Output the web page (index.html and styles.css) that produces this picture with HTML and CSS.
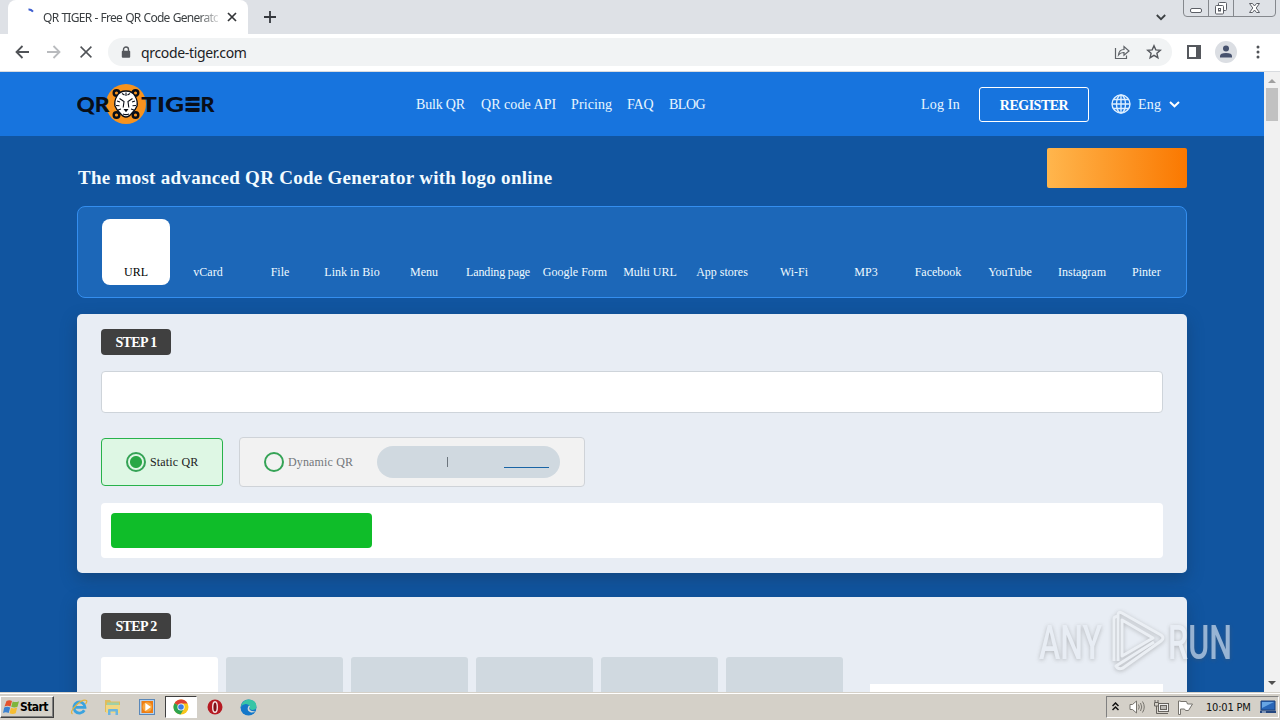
FILE: index.html
```html
<!DOCTYPE html>
<html lang="en">
<head>
    <meta charset="UTF-8">
    <meta name="viewport" content="width=device-width, initial-scale=1.0">
    <title>QR TIGER - Free QR Code Generator</title>
    <link rel="stylesheet" href="styles.css">
</head>
<body>
    <div class="tabstrip">
        <div class="tab">
            <svg class="spinner" width="16" height="16" viewBox="0 0 16 16"><path d="M6.500 1.500Q9 1.300 11 3.600" fill="none" stroke="#3f5fd0" stroke-width="2"/></svg>
            <span class="tab-title">QR TIGER - Free QR Code Generato</span>
            <svg width="10" height="10" viewBox="0 0 10 10"><path d="M1 1l8 8M9 1l-8 8" stroke="#333538" stroke-width="1.7"/></svg>
        </div>
        <svg class="new-tab" width="12" height="12" viewBox="0 0 12 12"><path d="M6 0v12M0 6h12" stroke="#35383d" stroke-width="1.8"/></svg>
        <svg class="tab-search" width="10" height="7" viewBox="0 0 10 7"><path d="M.8 1l4.2 4.2L9.2 1" fill="none" stroke="#3c4043" stroke-width="1.8"/></svg>
        <svg class="window-buttons" width="94" height="17" viewBox="0 0 94 17" fill="none" stroke="#85888d">
            <path d="M.5 0v13q0 3.500 3.500 3.500h85q3.500 0 3.500-3.500V0M25.500 0v16M50.500 0v16"/>
            <rect x="7.500" y="8.500" width="11" height="4" rx="1.500" fill="#fff" stroke="#5c5f66"/>
            <rect x="35.500" y="2.500" width="8" height="8" rx="1" fill="#fff" stroke="#5c5f66"/>
            <rect x="32.500" y="5.500" width="8" height="8.500" rx="1" fill="#fff" stroke="#5c5f66"/>
            <rect x="35.500" y="8.500" width="2" height="2.500" stroke="#5c5f66"/>
            <path d="M66.500 3.500h3l2 2.500 2-2.500h3l-3.300 4.500 3.300 4.500h-3l-2-2.500-2 2.500h-3l3.300-4.500z" fill="#fff" stroke="#5c5f66"/>
        </svg>
    </div>

    <div class="toolbar">
        <svg width="14" height="14" viewBox="0 0 14 14" fill="none" stroke="#505357" stroke-width="1.8"><path d="M14 7H1.500M7.500 1l-6 6 6 6"/></svg>
        <svg width="14" height="14" viewBox="0 0 14 14" fill="none" stroke="#b9bbbe" stroke-width="1.800"><path d="M0 7h12.500M6.500 1l6 6-6 6"/></svg>
        <svg class="stop" width="12" height="12" viewBox="0 0 12 12" fill="none" stroke="#505357" stroke-width="1.500"><path d="M.6.6l10.800 10.800M11.400.6L.6 11.400"/></svg>
        <div class="address">
            <svg width="10" height="13" viewBox="0 0 10 13"><path d="M2.500 5V3.500a2.500 2.500 0 0 1 5 0V5" fill="none" stroke="#55585d" stroke-width="1.400"/><rect x=".8" y="4.800" width="8.400" height="7" rx="1" fill="#55585d"/></svg>
            <span class="url">qrcode-tiger.com</span>
            <svg class="share" width="16" height="16" viewBox="0 0 16 16" fill="none" stroke="#5f6368" stroke-width="1.200"><path d="M1.500 4v10.500h11V11.500"/><path d="M4.500 11q.5-5.500 5.500-5.500V2.500L15 7l-5 4.300V8.500Q6.500 8.300 4.500 11z"/></svg>
            <svg class="star" width="16" height="16" viewBox="0 0 16 16" fill="none" stroke="#55585d" stroke-width="1.400"><path d="M8 1.800l1.800 4.100 4.500.4-3.400 3 1 4.400L8 11.400l-3.900 2.300 1-4.400-3.400-3 4.500-.4z"/></svg>
        </div>
        <svg class="panel" width="14" height="14" viewBox="0 0 14 14"><path d="M1 1h12v12H1z" fill="none" stroke="#55585d" stroke-width="2"/><path d="M9 0h5v14H9z" fill="#55585d"/></svg>
        <svg class="profile" width="22" height="22" viewBox="0 0 22 22"><circle cx="11" cy="11" r="11" fill="#dbdee3"/><circle cx="11" cy="7.500" r="3" fill="#47526e"/><path d="M5 16.500v-1.500q0-3 6-3t6 3v1.500z" fill="#47526e"/></svg>
        <svg class="dots" width="4" height="14" viewBox="0 0 4 14" fill="#505357"><circle cx="2" cy="2" r="1.500"/><circle cx="2" cy="7" r="1.500"/><circle cx="2" cy="12" r="1.500"/></svg>
    </div>

    <div class="viewport">
        <div class="page">
            <header class="site-header">
                <svg class="logo" width="140" height="42" viewBox="0 0 140 42">
                    <circle cx="49" cy="21" r="20" fill="#f7931e"/>
                    <g class="logo-text">
                        <text x="-.5" y="28.500" textLength="33" lengthAdjust="spacingAndGlyphs">QR</text>
                        <text x="64" y="28.500" textLength="43" lengthAdjust="spacingAndGlyphs">TIG</text>
                        <text x="109" y="28.500" textLength="14" lengthAdjust="spacingAndGlyphs">E</text>
                        <text x="123.500" y="28.500" textLength="14" lengthAdjust="spacingAndGlyphs">R</text>
                    </g>
                    <path d="M107.500 18.700h16M107.500 24h16" stroke="#1774de" stroke-width="2"/>
                    <path d="M108.500 16h14M108.500 21.400h14M108.500 26.800h14" stroke="#090e18" stroke-width="3.400"/>
                    <g fill="#f7931e" stroke="#090e18" stroke-width="2.400">
                        <circle cx="39.500" cy="10" r="2.800"/><circle cx="58.500" cy="10" r="2.800"/>
                        <circle cx="39.500" cy="32" r="2.800"/><circle cx="58.500" cy="32" r="2.800"/>
                    </g>
                    <path d="M49 8q6.500 0 9 5 3 5 2 10-1.500 4-5 7-3 4-6 4t-6-4q-3.500-3-5-7-1-5 2-10 2.500-5 9-5z" fill="#fff" stroke="#090e18" stroke-width="1.300"/>
                    <path d="M49 9.500v3.500M45 10.500l2.500 1.500M53 10.500l-2.500 1.500M40 18l3 1M58 18l-3 1M39 22.500l3.500.3M59 22.500l-3.500.3M41 27l3-1M57 27l-3-1M42.500 15.500l4.500 3-.8 6M55.500 15.500l-4.500 3 .8 6M46 31q3 1.200 6 0" fill="none" stroke="#090e18" stroke-width="1.100"/>
                    <path d="M46.500 26h5L49 29.300z" fill="#090e18"/>
                </svg>
                <nav class="main-nav">
                    <a class="nav-bulk">Bulk QR</a>
                    <a class="nav-api">QR code API</a>
                    <a class="nav-pricing">Pricing</a>
                    <a class="nav-faq">FAQ</a>
                    <a class="nav-blog">BLOG</a>
                </nav>
                <div class="account">
                    <a class="login">Log In</a>
                    <a class="register">REGISTER</a>
                    <svg class="globe" width="20" height="20" viewBox="0 0 20 20" fill="none" stroke="#dceeff" stroke-width="1.400"><circle cx="10" cy="10" r="9"/><ellipse cx="10" cy="10" rx="4.500" ry="9"/><path d="M10 1v18M1 10h18M2.500 5.500h15M2.500 14.500h15"/></svg>
                    <span class="lang">Eng</span>
                    <svg width="11" height="7" viewBox="0 0 11 7"><path d="M1 1l4.500 4.300L10 1" fill="none" stroke="#fff" stroke-width="2"/></svg>
                </div>
            </header>

            <main class="container">
                <div class="title-row">
                    <h1>The most advanced QR Code Generator with logo online</h1>
                    <div class="cta"></div>
                </div>

                <div class="types">
                    <div class="types-list">
                        <div class="type active">URL</div>
                        <div class="type">vCard</div>
                        <div class="type">File</div>
                        <div class="type">Link in Bio</div>
                        <div class="type">Menu</div>
                        <div class="type landing">Landing page</div>
                        <div class="type google">Google Form</div>
                        <div class="type">Multi URL</div>
                        <div class="type">App stores</div>
                        <div class="type">Wi-Fi</div>
                        <div class="type">MP3</div>
                        <div class="type">Facebook</div>
                        <div class="type">YouTube</div>
                        <div class="type">Instagram</div>
                        <div class="type last">Pinter</div>
                    </div>
                </div>

                <section class="card">
                    <span class="step">STEP 1</span>
                    <div class="url-input"></div>
                    <div class="options">
                        <div class="option static">
                            <span class="radio checked"></span>
                            <span>Static QR</span>
                        </div>
                        <div class="option dynamic">
                            <span class="radio"></span>
                            <span>Dynamic QR</span>
                            <div class="pill"><span class="divider"></span><span class="underline"></span></div>
                        </div>
                    </div>
                    <div class="generate"><div class="generate-button"></div></div>
                </section>

                <section class="card second">
                    <div class="left">
                        <span class="step">STEP 2</span>
                        <div class="swatches">
                            <div class="swatch selected"></div>
                            <div class="swatch"></div>
                            <div class="swatch"></div>
                            <div class="swatch"></div>
                            <div class="swatch"></div>
                            <div class="swatch"></div>
                        </div>
                    </div>
                    <div class="preview"></div>
                </section>
            </main>
        </div>
        <div class="scrollbar">
            <svg width="8" height="4" viewBox="0 0 8 4"><path d="M0 4l4-4 4 4z" fill="#a0a0a0"/></svg>
            <div class="thumb"></div>
            <svg class="down" width="8" height="4" viewBox="0 0 8 4"><path d="M0 0l4 4 4-4z" fill="#505050"/></svg>
        </div>
    </div>

    <div class="taskbar">
        <div class="start">
            <svg width="17" height="16" viewBox="0 0 17 16">
                <path d="M3.500 2q3-1.500 5.500 0L7.500 7.500q-3-1.300-6 0z" fill="#e5532d"/>
                <path d="M9.700 2.500q3 1.300 6.300-.3L14.500 7.800q-3 1.400-6.300 0z" fill="#7fb53c"/>
                <path d="M1.200 8.500q3-1.300 6 0L5.700 14q-3-1.300-5.700 0z" fill="#3c82d0"/>
                <path d="M8 8.800q3 1.300 6.200-.2l-1.500 5.600q-3 1.400-6.200 0z" fill="#f6bd32"/>
            </svg>
            <span>Start</span>
        </div>
        <svg class="ie" width="18" height="18" viewBox="0 0 18 18" fill="none">
            <path d="M14.300 12.300A5.600 5.600 0 1 1 15 9.300H5" stroke="#3aa3df" stroke-width="2.800"/>
            <path d="M2.500 16Q-.5 14 6 7.500T16.500 2.500q1 1-1 3.500" stroke="#e4b33b" stroke-width="1.200"/>
        </svg>
        <svg class="explorer" width="18" height="18" viewBox="0 0 18 18">
            <path d="M1 2h5l1 1.500h9V14H1z" fill="#dfbd5c"/><path d="M3 4.500h12v4H3z" fill="#9fd0a8"/>
            <path d="M2 7h14v8H2z" fill="#f1d783"/><path d="M4 17v-5q0-1 1-1h8q1 0 1 1v5h-2.500v-3.500h-5V17z" fill="#6bb5df"/>
        </svg>
        <svg class="player" width="16" height="16" viewBox="0 0 16 16">
            <rect x=".5" y=".5" width="15" height="15" fill="#b5d2ee" stroke="#5a88b9"/><rect x="2.500" y="2" width="11.500" height="12" fill="#ed7d14"/>
            <circle cx="8.300" cy="8" r="4.800" fill="#f9a63c"/><path d="M6.300 4v8L12 8z" fill="#fff"/>
        </svg>
        <div class="active-app">
            <svg width="16" height="16" viewBox="0 0 16 16">
                <circle cx="8" cy="8" r="7.500" fill="#f8c61c"/>
                <path d="M8 8L1.500 4.200A7.500 7.500 0 0 1 14.600 4.500H8z" fill="#de4034"/>
                <path d="M8 8L1.500 4.200A7.500 7.500 0 0 0 7.500 15.500L11 9.800z" fill="#2da450"/>
                <circle cx="8" cy="8" r="3.600" fill="#fff"/><circle cx="8" cy="8" r="2.800" fill="#3c7de4"/>
            </svg>
        </div>
        <svg class="opera" width="16" height="16" viewBox="0 0 16 16"><circle cx="8" cy="8" r="7.500" fill="#b61a22"/><ellipse cx="8" cy="8" rx="2.300" ry="5.300" fill="#801017" stroke="#f5e5e5" stroke-width="1.400"/></svg>
        <svg class="edge" width="17" height="17" viewBox="0 0 17 17">
            <circle cx="8.500" cy="8.500" r="8" fill="#1477c9"/>
            <path d="M1 8q1-7.500 8-7.500 7 .5 7.500 6.500 0 4-4 4-3.500 0-2.500-3Q8.500 4.500 5.500 5 2 5.500 1 8z" fill="#38c5a6"/>
            <path d="M8 8q-1.500 4 3 5.500 2.500.3 4.500-1.500-4.500 1-6-1.500-.8-1.500.5-3-1-1.500-2 .5z" fill="#d5d9d6"/>
        </svg>
        <div class="tray">
            <svg class="chevrons" width="7" height="9" viewBox="0 0 7 9" fill="none" stroke="#111" stroke-width="1.500"><path d="M.5 4l3-3 3 3M.5 8l3-3 3 3"/></svg>
            <svg class="speaker" width="16" height="14" viewBox="0 0 16 14" fill="none" stroke="#77746e"><path d="M1 4.500h2.500L7.500 1v12L3.500 9.500H1z" fill="#fff"/><path d="M9.500 4.500q1.500 2.500 0 5M11.500 3q2.500 4 0 8M13.500 1.500q3.500 5.500 0 11"/></svg>
            <svg class="network" width="17" height="16" viewBox="0 0 17 16" fill="none" stroke="#66635e"><rect x="5.500" y="4.500" width="10" height="8" fill="#eee"/><rect x="7.500" y="6.500" width="6" height="4" fill="#bbb9b5"/><path d="M6 14.500h9M2 1v2M5 1v2M1.500 3.500h4V7h-4zM3.500 7v7.500H6"/></svg>
            <svg class="flag" width="17" height="15" viewBox="0 0 17 15" stroke="#77746e" fill="#fff"><path d="M1.500 1v13.500h2V9h4l1 1.500h3L15.500 4h-5l-1-2.500h-6V1z"/></svg>
            <span class="clock">10:01 PM</span>
            <svg class="desktop" width="16" height="14" viewBox="0 0 16 14"><path d="M1 1h14v9H1z" fill="#2866b8" stroke="#183f7a"/><path d="M2 2h12L2 8z" fill="#67a5e4"/><path d="M0 10.500h16v2.500H0z" fill="#24477f"/><path d="M2 12h4" stroke="#d9e5f1"/></svg>
        </div>
    </div>

    <svg class="watermark" width="200" height="70" viewBox="0 0 200 70">
        <g class="mark-text">
            <text x="4" y="53" textLength="63" lengthAdjust="spacingAndGlyphs">ANY</text>
            <text x="133" y="53" textLength="64" lengthAdjust="spacingAndGlyphs">RUN</text>
        </g>
        <g class="mark-sign">
            <path d="M87 14v36l31-18z"/>
            <path d="M79 55V13q0-2.500 3-2.500"/>
            <path d="M83 55V9q0-4 4-2l39 22q4 3 0 6L88 62q-5 2-7-2l38-24"/>
        </g>
    </svg>
</body>
</html>
```

FILE: styles.css
```css
* {
    box-sizing: border-box;
}

body {
    margin: 0;
    width: 1280px;
    height: 720px;
    overflow: hidden;
    display: flex;
    flex-direction: column;
    position: relative;
    font-family: "Liberation Serif", "Times New Roman", serif;
}

svg {
    display: block;
    flex-shrink: 0;
}

/* browser window */
.tabstrip {
    height: 34px;
    background: #dee1e6;
    display: flex;
    align-items: flex-start;
    padding-left: 8px;
}

.tab {
    width: 240px;
    height: 34px;
    background: #fff;
    border-radius: 8px 8px 0 0;
    display: flex;
    align-items: center;
    padding-left: 14px;
}

.spinner {
    margin-top: -2px;
}

.tab-title {
    width: 175px;
    margin-left: 5px;
    margin-right: 9px;
    white-space: nowrap;
    font: 12px "Noto Sans", sans-serif;
    letter-spacing: -0.72px;
    word-spacing: 0.6px;
    color: #3c4043;
    -webkit-mask-image: linear-gradient(to right, #000 155px, transparent 180px);
    mask-image: linear-gradient(to right, #000 155px, transparent 180px);
}

.new-tab {
    margin: 11px 0 0 16px;
}

.tab-search {
    margin: 14px 17px 0 auto;
}

.window-buttons {
    margin-right: 3px;
}

.toolbar {
    height: 38px;
    background: #fff;
    border-bottom: 1px solid #d8dbdf;
    display: flex;
    align-items: center;
    gap: 18px;
    padding-left: 15px;
    padding-bottom: 1px;
}

.stop {
    margin-left: 1px;
}

.address {
    width: 1064px;
    height: 28px;
    margin-left: -2px;
    border-radius: 14px;
    background: #f1f3f4;
    display: flex;
    align-items: center;
    padding: 0 10px 0 13px;
}

.url {
    margin-left: 10px;
    font: 14px "Noto Sans", sans-serif;
    letter-spacing: -0.34px;
    color: #202124;
}

.share {
    margin-left: auto;
}

.star {
    margin-left: 16px;
}

.panel {
    margin-left: -3px;
}

.profile {
    margin-left: -4px;
}

.dots {
    margin-left: 1px;
}

.viewport {
    height: 620px;
    display: flex;
}

.page {
    width: 1264px;
    height: 620px;
    overflow: hidden;
    background: #1155a0;
}

.scrollbar {
    width: 16px;
    background: #f1f1f1;
    display: flex;
    flex-direction: column;
    align-items: center;
    padding: 7px 0;
}

.thumb {
    width: 12px;
    height: 33px;
    margin-top: 5px;
    background: #c1c1c1;
}

.down {
    margin-top: auto;
}

/* site header */
.site-header {
    height: 64px;
    background: #1774de;
    color: #e9f7ff;
    display: flex;
    align-items: center;
    padding-left: 77px;
    font-size: 14px;
}

.logo-text {
    font: 900 20px Lato, sans-serif;
    fill: #090e18;
}

.main-nav {
    margin-left: 199px;
    padding-top: 1px;
    display: flex;
    width: 305px;
    white-space: nowrap;
}

.nav-bulk {
    width: 65px;
    letter-spacing: -0.2px;
}

.nav-api {
    width: 90px;
    letter-spacing: 0.05px;
}

.nav-pricing {
    width: 56px;
    letter-spacing: 0.1px;
}

.nav-faq {
    width: 42px;
    letter-spacing: -0.15px;
}

.nav-blog {
    letter-spacing: -0.5px;
}

.account {
    display: flex;
    align-items: center;
    white-space: nowrap;
}

.login {
    width: 58px;
    margin-left: 200px;
    padding-top: 1px;
    letter-spacing: 0.2px;
}

.register {
    width: 110px;
    height: 35px;
    border: 1px solid #fff;
    border-radius: 3px;
    text-align: center;
    line-height: 35px;
    font-weight: bold;
    color: #fff;
    letter-spacing: -0.5px;
}

.globe {
    margin-left: 22px;
}

.lang {
    width: 31px;
    margin-left: 7px;
    padding-top: 1px;
    letter-spacing: 0.2px;
}

.container {
    width: 1110px;
    margin-left: 77px;
}

.title-row {
    height: 70px;
    display: flex;
    justify-content: space-between;
    padding-top: 12px;
}

h1 {
    margin: 18px 0 0 1px;
    font-size: 19px;
    line-height: 24px;
    letter-spacing: 0.28px;
    color: #f2fbff;
}

.cta {
    width: 140px;
    height: 40px;
    border-radius: 2px;
    background: linear-gradient(to right, #ffb64d, #fa7800);
}

.types {
    height: 92px;
    border: 1px solid #348eef;
    border-radius: 8px;
    background: #1c67b8;
    padding: 12px 24px;
}

.types-list {
    display: flex;
    gap: 4px;
}

.type {
    width: 68px;
    height: 66px;
    flex-shrink: 0;
    padding-top: 45px;
    text-align: center;
    white-space: nowrap;
    font-size: 12px;
    line-height: 16px;
    color: #eefaff;
}

.type.active {
    background: #fff;
    color: #000;
    border-radius: 8px;
}

.type.landing {
    width: 72px;
    letter-spacing: -0.15px;
}

.type.google {
    width: 74px;
}

.type.last {
    width: 42px;
    padding-left: 12px;
    text-align: left;
}

/* steps */
.card {
    height: 259px;
    margin-top: 16px;
    padding: 15px 24px;
    border-radius: 5px;
    background: #e8edf4;
    box-shadow: 0 6px 16px rgba(20, 50, 80, 0.4);
}

.step {
    display: block;
    width: 70px;
    height: 26px;
    border-radius: 4px;
    background: #404040;
    color: #fff;
    text-align: center;
    font-weight: bold;
    font-size: 14px;
    line-height: 27px;
    letter-spacing: -0.6px;
}

.url-input {
    height: 42px;
    margin-top: 16px;
    border: 1px solid #ced4da;
    border-radius: 4px;
    background: #fff;
}

.options {
    display: flex;
    align-items: center;
    gap: 16px;
    margin-top: 24px;
}

.option {
    display: flex;
    align-items: center;
    height: 50px;
    border: 1px solid #cfd3d8;
    border-radius: 4px;
    padding-left: 24px;
    gap: 4px;
    font-size: 12px;
    line-height: 16px;
    letter-spacing: 0.15px;
    white-space: nowrap;
}

.option.static {
    width: 122px;
    height: 48px;
    border-color: #28b24b;
    background: #def7e4;
    color: #222;
}

.option.dynamic {
    width: 346px;
    background: #f2f2f2;
    color: #73777b;
}

.radio {
    width: 20px;
    height: 20px;
    border: 2px solid #35a356;
    border-radius: 50%;
    flex-shrink: 0;
}

.radio.checked {
    background: radial-gradient(circle, #28a745 5.5px, transparent 6.5px);
}

.pill {
    width: 183px;
    height: 32px;
    margin-left: auto;
    margin-right: 24px;
    border-radius: 16px;
    background: #d0d9e0;
    display: flex;
    align-items: center;
}

.divider {
    width: 1px;
    height: 10px;
    margin-left: 70px;
    background: #6c757d;
}

.underline {
    width: 45px;
    height: 1px;
    margin: 10px 0 0 56px;
    background: #1964a5;
}

.generate {
    height: 55px;
    margin-top: 16px;
    padding: 10px;
    border-radius: 4px;
    background: #fff;
}

.generate-button {
    width: 261px;
    height: 35px;
    border-radius: 4px;
    background: #0fbd29;
}

.card.second {
    margin-top: 24px;
    padding-top: 16px;
    display: flex;
    justify-content: space-between;
}

.swatches {
    display: flex;
    gap: 8px;
    margin-top: 18px;
}

.swatch {
    width: 117px;
    height: 100px;
    border-radius: 3px;
    background: #d0d9e0;
}

.swatch.selected {
    background: #fff;
}

.preview {
    width: 293px;
    height: 150px;
    margin-top: 71px;
    background: #fff;
}

/* desktop */
.taskbar {
    height: 28px;
    border-top: 1px solid #d4d0c8;
    box-shadow: inset 0 1px #fff;
    background: #d4d0c8;
    display: flex;
    align-items: center;
    padding-top: 1px;
}

.start {
    width: 54px;
    height: 22px;
    border: 1px solid;
    border-color: #fff #404040 #404040 #fff;
    box-shadow: inset -1px -1px #808080;
    display: flex;
    align-items: center;
    padding-left: 2px;
    font: bold 12px "DejaVu Sans Condensed", "DejaVu Sans", sans-serif;
    letter-spacing: -0.6px;
}

.ie {
    margin-left: 16px;
}

.explorer {
    margin-left: 16px;
}

.player {
    margin-left: 17px;
}

.active-app {
    width: 32px;
    height: 22px;
    margin-left: 10px;
    border: 1px solid;
    border-color: #404040 #fff #fff #404040;
    background: #fff;
    display: flex;
    align-items: center;
    justify-content: center;
}

.opera {
    margin-left: 10px;
}

.edge {
    margin-left: 17px;
}

.tray {
    width: 173px;
    height: 22px;
    margin-left: auto;
    margin-right: 1px;
    border: 1px solid;
    border-color: #808080 #fff #fff #808080;
    display: flex;
    align-items: center;
}

.chevrons {
    margin-left: 5px;
    margin-top: -2px;
}

.speaker {
    margin-left: 10px;
}

.network {
    margin-left: 8px;
}

.flag {
    margin-left: 7px;
}

.clock {
    width: 53px;
    margin-left: 12px;
    white-space: nowrap;
    font: 11px "DejaVu Sans Condensed", "DejaVu Sans", sans-serif;
    letter-spacing: -0.2px;
    color: #111;
}

.desktop {
    margin-left: 1px;
}

.watermark {
    position: absolute;
    left: 1035px;
    top: 606px;
    filter: drop-shadow(0 1px 2px rgba(90, 90, 90, 0.6));
    opacity: 0.62;
}

.mark-text {
    font: 500 49px Roboto, sans-serif;
    fill: #e9eef5;
}

.mark-sign {
    fill: none;
    stroke: #eef1f5;
    stroke-width: 3;
    stroke-linejoin: round;
}
```
